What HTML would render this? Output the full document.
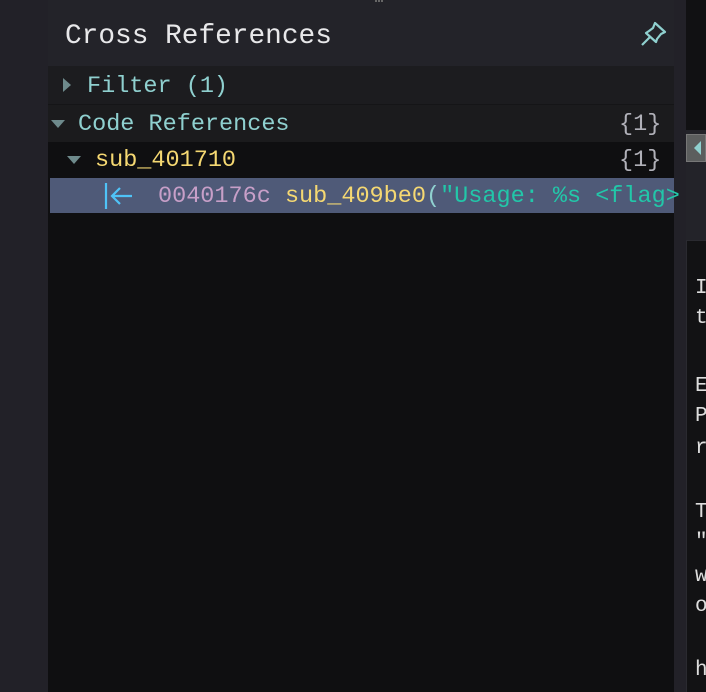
<!DOCTYPE html>
<html><head><style>
*{margin:0;padding:0;box-sizing:border-box}
body{width:706px;height:692px;overflow:hidden;background:#232329;font-family:"Liberation Mono",monospace;position:relative}
.a{position:absolute}
.t{font-size:23.5px;line-height:1;white-space:pre}
</style></head><body>
<div class="a" style="left:0;top:0;width:48px;height:692px;background:#222128"></div>
<div class="a" style="left:375px;top:0;width:8px;height:3px;border-top:2px dotted #666"></div>
<div class="a" style="left:65px;top:21px;font-size:27.8px;color:#e8e8ea;white-space:pre">Cross References</div>
<svg class="a" style="left:638px;top:20px" width="30" height="28" viewBox="0 0 30 28"><path d="M17 3 L27 12 L23 14 L19 19 L18 22 L8 13 L11 11 L15 8 Z M12 17 L4 25" fill="none" stroke="#8fd0cf" stroke-width="2.2" stroke-linejoin="round"/></svg>
<div class="a" style="left:674px;top:0;width:12px;height:692px;background:#222128"></div>
<div class="a" style="left:686px;top:0;width:20px;height:130px;background:#111113"></div>
<div class="a" style="left:686px;top:134px;width:20px;height:28px;background:#5c5e5e;border:1px solid #777"></div>
<div class="a" style="left:694px;top:141px;width:0;height:0;border-top:7px solid transparent;border-bottom:7px solid transparent;border-right:7px solid #8fd0cf"></div>
<div class="a" style="left:686px;top:240px;width:20px;height:452px;background:#121214;border-left:1px solid #2a2a30;border-top:1px solid #2a2a30"></div>
<div class="a" style="left:695px;top:278px;font-family:'Liberation Mono',monospace;font-size:21px;color:#ddd;line-height:1">
<div class="a" style="top:0">I</div><div class="a" style="top:30px">t</div>
<div class="a" style="top:98px">E</div><div class="a" style="top:128px">P</div><div class="a" style="top:160px">r</div>
<div class="a" style="top:224px">T</div><div class="a" style="top:254px">"</div><div class="a" style="top:288px">w</div><div class="a" style="top:318px">o</div>
<div class="a" style="top:382px">h</div></div>
<div class="a" style="left:48px;top:66px;width:626px;height:626px;background:#0f0f11"></div>
<div class="a" style="left:48px;top:66px;width:626px;height:38px;background:#1c1c1f"></div>
<div class="a" style="left:48px;top:104px;width:626px;height:38px;background:#1b1b1d;border-top:1px solid #151517"></div>
<div class="a" style="left:50px;top:178px;width:624px;height:35px;background:#4f5a78"></div>
<div class="a" style="left:63px;top:78px;width:0;height:0;border-top:7px solid transparent;border-bottom:7px solid transparent;border-left:8px solid #6e8a8c"></div>
<div class="a t" style="left:87px;top:75px;color:#8fd0cf">Filter (1)</div>
<div class="a" style="left:51px;top:120px;width:0;height:0;border-left:7px solid transparent;border-right:7px solid transparent;border-top:8px solid #6e8a8c"></div>
<div class="a t" style="left:78px;top:113px;color:#8fd0cf">Code References</div>
<div class="a t" style="left:619px;top:113px;color:#b0b0b8">{1}</div>
<div class="a" style="left:67px;top:156px;width:0;height:0;border-left:7px solid transparent;border-right:7px solid transparent;border-top:8px solid #6e8a8c"></div>
<div class="a t" style="left:95px;top:149px;color:#f5d872">sub_401710</div>
<div class="a t" style="left:619px;top:149px;color:#b0b0b8">{1}</div>
<svg class="a" style="left:104px;top:182px" width="32" height="28" viewBox="0 0 32 28"><path d="M2 1 V27 M28 14 H9 M16 6 L8 14 L16 22" fill="none" stroke="#4fc3f7" stroke-width="2.2"/></svg>
<div class="a t" style="left:158px;top:185px"><span style="color:#c79fc8">0040176c</span> <span style="color:#f5d872">sub_409be0</span><span style="color:#8fd0cf">(</span><span style="color:#22c7a9">"Usage: %s &lt;flag&gt;</span></div>
</body></html>
